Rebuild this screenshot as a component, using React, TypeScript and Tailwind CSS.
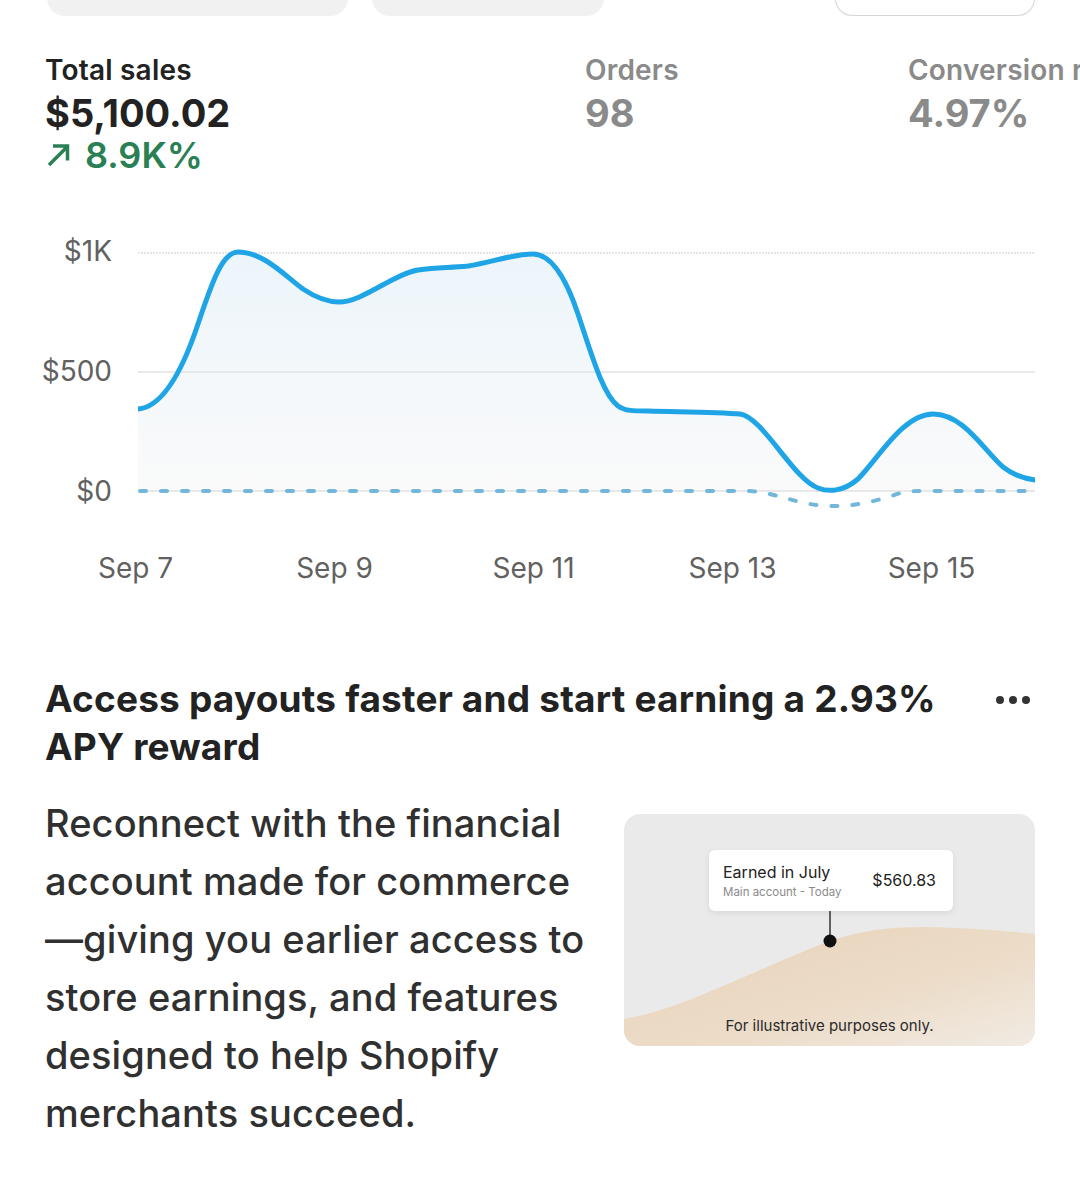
import React from "react";

const LINE =
  "M0,180 C25,178 45,140 60,95 C75,50 85,23 100,23 C125,23 145,45 165,60 C180,70 190,73 201,73 C225,73 255,45 280,41 C300,38 310,39 330,37 C355,33 375,25 395,25 C410,25 425,40 440,85 C455,130 465,165 480,177 C487,182 495,182 510,182 C550,183 580,183 602,185 C625,188 655,250 680,259 C690,263 705,263 720,250 C740,230 765,185 795,185 C825,185 845,220 865,238 C878,248 888,250 897,251";

function SalesChart() {
  return (
    <svg width="897" height="290" viewBox="0 0 897 290" className="block">
      <defs>
        <linearGradient id="area" x1="0" y1="0" x2="0" y2="1">
          <stop offset="0" stopColor="#ecf5fb" />
          <stop offset="1" stopColor="#fafafa" />
        </linearGradient>
      </defs>
      <path d={`${LINE} L897,262 L0,262 Z`} fill="url(#area)" />
      <line x1="0" y1="24" x2="897" y2="24" stroke="#dedede" strokeWidth="1.5" strokeDasharray="2 1" />
      <line x1="0" y1="143" x2="897" y2="143" stroke="#e2e2e2" strokeWidth="1.5" />
      <line x1="0" y1="262" x2="897" y2="262" stroke="#e2e2e2" strokeWidth="1.5" />
      <path
        d="M2,262 H612 C640,264 660,276 690,277 C715,278 740,272 765,263 C770,262 780,262 790,262 H895"
        fill="none"
        stroke="#72b7da"
        strokeWidth="4"
        strokeLinecap="round"
        strokeDasharray="6 15"
      />
      <path d={LINE} fill="none" stroke="#1fa5e6" strokeWidth="5" strokeLinecap="round" strokeLinejoin="round" />
    </svg>
  );
}

function PayoutCard() {
  return (
    <div className="relative shrink-0 w-[411px] h-[232px] rounded-[16px] overflow-hidden bg-[#eaeaea] mt-[20px]">
      <svg className="absolute inset-0" width="411" height="232" viewBox="0 0 411 232">
        <defs>
          <linearGradient id="sand" x1="0" y1="0" x2="1" y2="1">
            <stop offset="0" stopColor="#e8d2b9" />
            <stop offset="0.6" stopColor="#ecdcc8" />
            <stop offset="1" stopColor="#f1ebe3" />
          </linearGradient>
        </defs>
        <path
          d="M0,205 C60,195 120,160 206,127 C250,112 290,112 330,114 C370,116 395,118 411,120 L411,232 L0,232 Z"
          fill="url(#sand)"
        />
        <line x1="206" y1="97" x2="206" y2="125" stroke="#333" strokeWidth="1.5" />
        <circle cx="206" cy="127" r="6.5" fill="#111" />
      </svg>
      <div className="absolute left-[85px] top-[36px] w-[244px] h-[61px] bg-white rounded-[6px] shadow-[0_2px_6px_rgba(0,0,0,0.08)] flex items-center justify-between pl-[14px] pr-[17px]">
        <div className="flex flex-col">
          <span className="text-[16px] leading-[20px] text-[#222]">Earned in July</span>
          <span className="text-[11.5px] leading-[16px] text-[#8a8a8a] mt-[2px]">Main account - Today</span>
        </div>
        <span className="text-[16px] text-[#222] mt-[-2px]">$560.83</span>
      </div>
      <div className="absolute left-0 right-0 bottom-[10px] text-center text-[15px] leading-[20px] text-[#2a2a2a]">
        For illustrative purposes only.
      </div>
    </div>
  );
}

export default function App() {
  return (
    <div className="min-h-[1184px] w-[1080px] bg-white overflow-hidden font-['Inter',sans-serif] text-[#303030]">
      {/* cut-off filter pills at the top */}
      <div className="h-[16px] overflow-hidden flex items-end">
        <div className="shrink-0 ml-[47px] w-[301px] h-[40px] rounded-[18px] bg-[#f1f1f1]" />
        <div className="shrink-0 ml-[24px] w-[232px] h-[40px] rounded-[18px] bg-[#f1f1f1]" />
        <div className="shrink-0 ml-[231px] w-[200px] h-[40px] rounded-[18px] bg-white border-[1.5px] border-[#d6d6d6] shadow-[0_1px_2px_rgba(0,0,0,0.08)]" />
      </div>

      {/* metrics */}
      <div className="flex mt-[38px] pl-[45px] whitespace-nowrap">
        <div className="shrink-0 w-[540px] flex flex-col">
          <span className="text-[28px] leading-[32px] font-semibold text-[#222] tracking-[0.2px]">Total sales</span>
          <span className="text-[38px] leading-[44px] mt-[5px] font-bold text-[#222]">$5,100.02</span>
          <span className="text-[36px] leading-[40px] font-semibold text-[#2a7f55] flex items-center">
            <svg width="26" height="26" viewBox="0 0 26 26" className="mr-[14px]">
              <path d="M4 23 L22 5 M8 4 H22.5 V18.5" fill="none" stroke="#2a7f55" strokeWidth="3.5" />
            </svg>
            8.9K%
          </span>
        </div>
        <div className="shrink-0 w-[323px] flex flex-col">
          <span className="text-[28px] leading-[32px] font-semibold text-[#8a8a8a] tracking-[0.2px]">Orders</span>
          <span className="text-[38px] leading-[44px] mt-[5px] font-bold text-[#8a8a8a]">98</span>
        </div>
        <div className="shrink-0 flex flex-col">
          <span className="text-[28px] leading-[32px] font-semibold text-[#8a8a8a] tracking-[0.2px]">Conversion rate</span>
          <span className="text-[38px] leading-[44px] mt-[5px] font-bold text-[#8a8a8a]">4.97%</span>
        </div>
      </div>

      {/* chart */}
      <div className="flex mt-[54px]">
        <div className="w-[112px] flex flex-col items-end pt-[2px] gap-[80px] text-[28px] leading-[40px] text-[#616161]">
          <span className="h-[40px]">$1K</span>
          <span className="h-[40px]">$500</span>
          <span className="h-[40px]">$0</span>
        </div>
        <div className="ml-[26px]">
          <SalesChart />
        </div>
      </div>
      <div className="flex pl-[36px] mt-[31px] text-[28px] leading-[36px] text-[#616161]">
        <span className="w-[199px] text-center">Sep 7</span>
        <span className="w-[199px] text-center">Sep 9</span>
        <span className="w-[199px] text-center">Sep 11</span>
        <span className="w-[199px] text-center">Sep 13</span>
        <span className="w-[199px] text-center">Sep 15</span>
      </div>

      {/* payouts promo */}
      <div className="flex justify-between items-start pl-[45px] pr-[50px] mt-[89px]">
        <h2 className="text-[37px] leading-[48px] font-bold text-[#222] tracking-[0.2px] whitespace-nowrap">
          Access payouts faster and start earning a 2.93%
          <br />
          APY reward
        </h2>
        <div className="flex gap-[5px] mt-[21px]">
          <span className="w-[8px] h-[8px] rounded-full bg-[#333]" />
          <span className="w-[8px] h-[8px] rounded-full bg-[#333]" />
          <span className="w-[8px] h-[8px] rounded-full bg-[#333]" />
        </div>
      </div>
      <div className="flex pl-[45px] pr-[45px] mt-[23px]">
        <p className="shrink-0 w-[579px] text-[38px] leading-[58px] font-medium text-[#303030] tracking-[0.1px] whitespace-nowrap">
          Reconnect with the financial
          <br />
          account made for commerce
          <br />
          —giving you earlier access to
          <br />
          store earnings, and features
          <br />
          designed to help Shopify
          <br />
          merchants succeed.
        </p>
        <PayoutCard />
      </div>
    </div>
  );
}
